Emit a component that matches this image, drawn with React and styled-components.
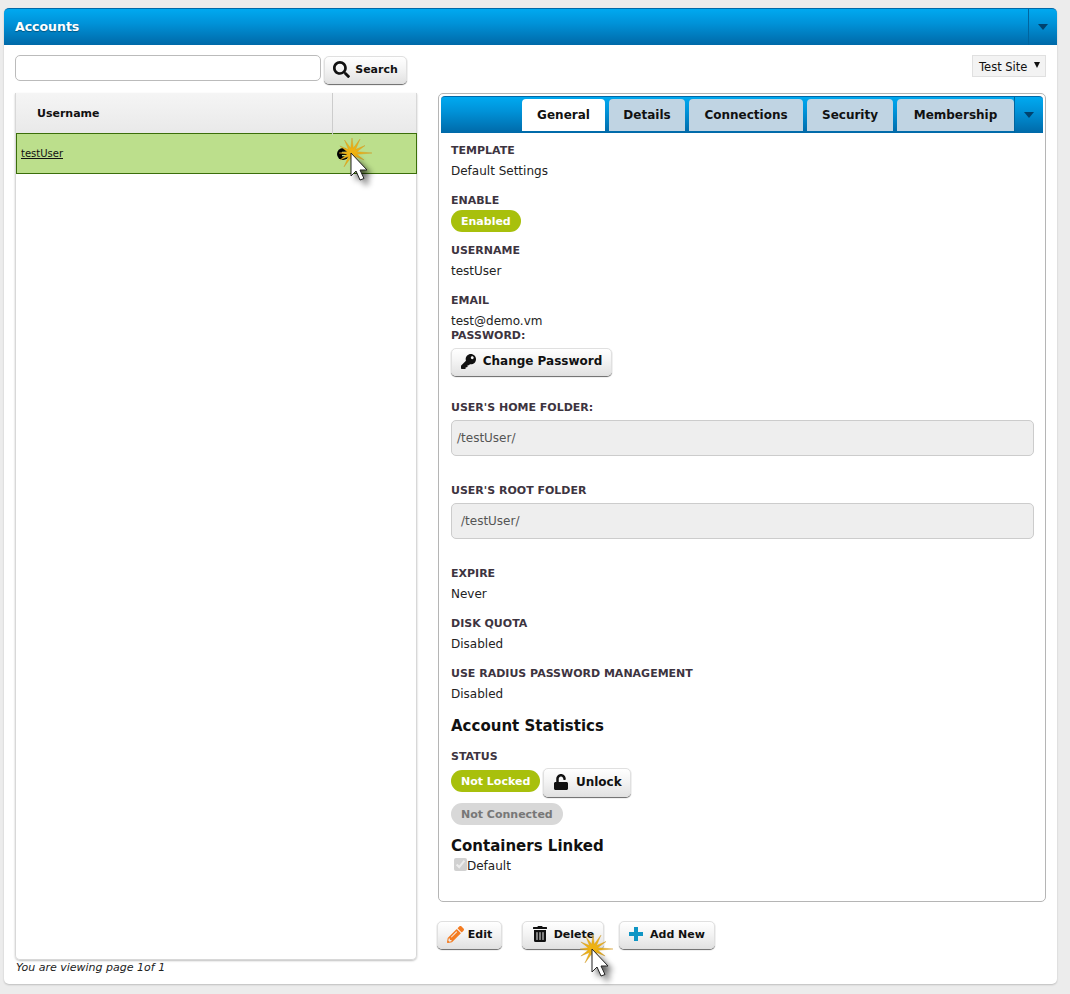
import React from 'react';
import styled, { createGlobalStyle } from 'styled-components';
import { FaSearch, FaKey, FaUnlock, FaPencilAlt, FaTrashAlt } from 'react-icons/fa';

const GlobalStyle = createGlobalStyle`
html, body { margin: 0; padding: 0; background: #ececec; }
body { font-family: "DejaVu Sans", Verdana, sans-serif; font-size: 12px; color: #111; }
* { box-sizing: border-box; }
`;

const Page = styled.div`
width: 1070px;
height: 994px;
padding: 8px 13px 10px 4px;
`;

const Panel = styled.div`
height: 976px;
background: #fff;
border-radius: 5px;
box-shadow: 0 1px 2px rgba(0,0,0,0.2);
display: flex;
flex-direction: column;
`;

const BlueBar = styled.div`
display: flex;
align-items: stretch;
background: linear-gradient(#00a9f0 0%, #0092d8 40%, #0069a8 100%);
border-top: 1px solid #0069a8;
border-radius: ${p => p.$radius}px ${p => p.$radius}px 0 0;
height: 37px;
`;

const PanelTitle = styled.h1`
flex: 1;
margin: 0;
padding-left: 11px;
line-height: 36px;
font-size: 12.5px;
font-weight: 700;
color: #fff;
text-shadow: 0 1px 1px rgba(0,0,0,0.35);
`;

const ArrowCell = styled.div`
width: 29px;
display: flex;
align-items: center;
justify-content: center;
border-left: 1px solid #00659f;
&::after {
    content: '';
    border-left: 5px solid transparent;
    border-right: 5px solid transparent;
    border-top: 6px solid #00426e;
}
`;

const Body = styled.div`
flex: 1;
display: grid;
grid-template-columns: 402px 608px;
column-gap: 21px;
padding: 10px 11px 0;
`;

const Column = styled.div`
display: flex;
flex-direction: column;
`;

const TopRow = styled.div`
height: 38px;
display: flex;
align-items: flex-start;
justify-content: ${p => p.$end ? 'flex-end' : 'flex-start'};
`;

const SearchInput = styled.input`
width: 306px;
height: 26px;
border: 1px solid #bbb;
border-radius: 5px;
background: #fff;
margin-right: 3px;
`;

const Button = styled.button`
display: inline-flex;
align-items: center;
justify-content: center;
position: relative;
gap: ${p => p.$gap || 7}px;
width: ${p => p.$width}px;
height: ${p => p.$height || 28}px;
margin: ${p => p.$margin || 0};
padding: 0 0 2px;
font-family: "DejaVu Sans", Verdana, sans-serif;
font-size: ${p => p.$font || 11}px;
font-weight: 700;
color: #111;
background: linear-gradient(#fff 0%, #f4f4f4 45%, #e2e2e2 100%);
border: 1px solid #e0e0e0;
border-radius: 5px;
box-shadow: 0 1px 1px 0 #666;
svg { flex: none; }
`;

const Grid = styled.div`
height: 867px;
border: 1px solid #d8d8d8;
border-top: 0;
border-radius: 0 0 5px 5px;
box-shadow: 0 1px 2px rgba(0,0,0,0.25);
`;

const GridHead = styled.div`
height: 40px;
display: grid;
grid-template-columns: 317px 1fr;
background: linear-gradient(#f5f5f5, #e9e9e9);
`;

const HeadCell = styled.div`
padding-left: 21px;
line-height: 42px;
font-size: 11px;
font-weight: 700;
border-right: ${p => p.$divider ? '1px solid #ccc' : '0'};
`;

const GridRow = styled.div`
height: 41px;
display: grid;
grid-template-columns: 316px 1fr;
align-items: center;
background: #bcdf8c;
border: 1px solid #3b6e0a;
margin-right: -1px;
`;

const UserLink = styled.a`
padding-left: 4px;
font-size: 10px;
color: #111;
text-decoration: underline;
`;

const RowAction = styled.div`
position: relative;
height: 100%;
display: flex;
align-items: center;
padding-left: 4px;
`;

const PageNote = styled.div`
height: 14px;
margin-top: 1px;
padding-left: 1px;
line-height: 14px;
font-size: 11px;
font-style: italic;
color: #222;
`;

const SiteSelect = styled.div`
width: 74px;
height: 22px;
display: flex;
align-items: center;
justify-content: space-between;
padding: 1px 5px 0 6px;
font-size: 11.5px;
background: #f3f3f3;
border: 1px solid #e0e0e0;
&::after {
    content: '';
    margin-bottom: 3px;
    border-left: 3px solid transparent;
    border-right: 3px solid transparent;
    border-top: 6px solid #111;
}
`;

const TabPanel = styled.div`
height: 809px;
border: 1px solid #b5b5b5;
border-radius: 5px;
padding: 2px;
`;

const TabList = styled.div`
flex: 1;
display: flex;
justify-content: flex-end;
align-items: flex-end;
gap: 4px;
`;

const Tab = styled.div`
width: ${p => p.$width}px;
height: 32px;
margin-bottom: 2px;
display: flex;
align-items: center;
justify-content: center;
font-size: 12px;
font-weight: 700;
border-radius: 4px 4px 0 0;
background: ${p => p.$active ? '#fff' : '#c0d4e3'};
`;

const TabBody = styled.div`
padding: 8px 9px 0 10px;
`;

const Field = styled.div`
margin-bottom: ${p => p.$gap ?? 10}px;
`;

const Label = styled.div`
line-height: ${p => p.$line || 20}px;
font-size: 11px;
font-weight: 700;
color: #3d3440;
`;

const Value = styled.div`
line-height: 20px;
font-size: 12px;
color: #222;
`;

const Badge = styled.span`
display: block;
width: fit-content;
height: 22px;
line-height: 23px;
padding: 0 10px;
border-radius: 11px;
font-size: 11px;
font-weight: 700;
color: ${p => p.$off ? '#777' : '#fff'};
background: ${p => p.$off ? '#d8d8d8' : '#a8c00c'};
`;

const EnableBadge = styled(Badge)`
margin-top: -1px;
`;

const LockBadge = styled(Badge)`
margin-top: 2px;
`;

const ReadOnlyBox = styled.div`
height: 36px;
margin-top: 2px;
padding-left: ${p => p.$pad}px;
line-height: 34px;
font-size: 12px;
color: #555;
background: #eee;
border: 1px solid #ccc;
border-radius: 5px;
`;

const SectionTitle = styled.h3`
margin: ${p => p.$top}px 0 0;
line-height: 22px;
font-size: 15px;
font-weight: 700;
color: #111;
`;

const StatusLabel = styled(Label)`
margin-top: 10px;
`;

const StatusRow = styled.div`
display: flex;
align-items: flex-start;
gap: 3px;
height: 29px;
margin-top: 1px;
`;

const ConnectionRow = styled.div`
margin-top: 6px;
height: 23px;
`;

const CheckRow = styled.label`
display: flex;
align-items: center;
height: 18px;
font-size: 12px;
color: #222;
input {
    width: 13px;
    height: 13px;
    margin: 0 0 0 3px;
    transform: translateY(-2px);
}
`;

const Actions = styled.div`
display: flex;
margin: 19px 0 0 -1px;
`;

const Burst = styled.svg`
position: absolute;
left: ${p => p.$left}px;
top: ${p => p.$top}px;
pointer-events: none;
overflow: visible;
`;

// spiky star behind the click cursor
const spokes = [20, 14, 17, 14, 16, 14, 13, 14, 15, 15, 16, 15];
const burstPoints = Array.from({ length: 24 }, (_, i) => {
    const angle = (i / 24) * Math.PI * 2;
    const radius = i % 2 === 0 ? spokes[i / 2] : 5;
    return `${(24 + Math.cos(angle) * radius).toFixed(1)},${(24 + Math.sin(angle) * radius).toFixed(1)}`;
}).join(' ');

const ClickCursor = ({ left, top }) => (
    <Burst $left={left} $top={top} width="48" height="60" viewBox="0 0 48 60">
        <defs>
            <filter id="cursor-shadow" x="-80%" y="-80%" width="260%" height="260%">
                <feGaussianBlur stdDeviation="3" />
            </filter>
        </defs>
        <polygon points={burstPoints} fill="#eeb212" stroke="#c9962a" strokeWidth="0.4" />
        <path d="M28 29 L28 52 L33 47 L37 56 L41 54 L37 46 L44 46 Z" fill="#000" opacity="0.65" filter="url(#cursor-shadow)" />
        <path d="M23 24 L23 47 L28 42 L32 51 L36 49.5 L32 41 L39 41 Z" fill="#fff" stroke="#222" strokeWidth="1" strokeLinejoin="round" />
    </Burst>
);

const RowIcon = () => (
    <svg width="12" height="12" viewBox="0 0 12 12">
        <circle cx="6" cy="6" r="6" fill="#000" />
        <path d="M5 4.4 H11 M5 7.6 H11" stroke="#bcdf8c" strokeWidth="1.2" />
    </svg>
);

const PlusIcon = () => (
    <svg width="14" height="14" viewBox="0 0 14 14">
        <path d="M5 0 H9 V5 H14 V9 H9 V14 H5 V9 H0 V5 H5 Z" fill="#0f95c4" />
    </svg>
);

const tabs = [
    { name: 'General', width: 83, active: true },
    { name: 'Details', width: 76 },
    { name: 'Connections', width: 114 },
    { name: 'Security', width: 86 },
    { name: 'Membership', width: 117 },
];

const App = () => (
    <Page>
        <GlobalStyle />
        <Panel>
            <BlueBar $radius={5}>
                <PanelTitle>Accounts</PanelTitle>
                <ArrowCell />
            </BlueBar>
            <Body>
                <Column>
                    <TopRow>
                        <SearchInput />
                        <Button $width={83} $margin="1px 0 0" $gap={5}>
                            <FaSearch size={17} /> Search
                        </Button>
                    </TopRow>
                    <Grid>
                        <GridHead>
                            <HeadCell $divider>Username</HeadCell>
                            <HeadCell />
                        </GridHead>
                        <GridRow>
                            <UserLink>testUser</UserLink>
                            <RowAction>
                                <RowIcon />
                                <ClickCursor left={-5} top={-5} />
                            </RowAction>
                        </GridRow>
                    </Grid>
                    <PageNote>You are viewing page 1of 1</PageNote>
                </Column>
                <Column>
                    <TopRow $end>
                        <SiteSelect>Test Site</SiteSelect>
                    </TopRow>
                    <TabPanel>
                        <BlueBar $radius={4}>
                            <TabList>
                                {tabs.map(tab => (
                                    <Tab key={tab.name} $width={tab.width} $active={tab.active}>{tab.name}</Tab>
                                ))}
                            </TabList>
                            <ArrowCell />
                        </BlueBar>
                        <TabBody>
                            <Field>
                                <Label>TEMPLATE</Label>
                                <Value>Default Settings</Value>
                            </Field>
                            <Field $gap={9}>
                                <Label>ENABLE</Label>
                                <EnableBadge>Enabled</EnableBadge>
                            </Field>
                            <Field>
                                <Label>USERNAME</Label>
                                <Value>testUser</Value>
                            </Field>
                            <Field $gap={-2}>
                                <Label>EMAIL</Label>
                                <Value>test@demo.vm</Value>
                            </Field>
                            <Field $gap={22}>
                                <Label $line={14}>PASSWORD:</Label>
                                <Button $width={161} $margin="5px 0 0" $font={12}>
                                    <FaKey size={15} /> Change Password
                                </Button>
                            </Field>
                            <Field $gap={25}>
                                <Label>USER'S HOME FOLDER:</Label>
                                <ReadOnlyBox $pad={5}>/testUser/</ReadOnlyBox>
                            </Field>
                            <Field $gap={25}>
                                <Label>USER'S ROOT FOLDER</Label>
                                <ReadOnlyBox $pad={9}>/testUser/</ReadOnlyBox>
                            </Field>
                            <Field>
                                <Label>EXPIRE</Label>
                                <Value>Never</Value>
                            </Field>
                            <Field>
                                <Label>DISK QUOTA</Label>
                                <Value>Disabled</Value>
                            </Field>
                            <Field $gap={0}>
                                <Label>USE RADIUS PASSWORD MANAGEMENT</Label>
                                <Value>Disabled</Value>
                            </Field>
                            <SectionTitle $top={11}>Account Statistics</SectionTitle>
                            <StatusLabel>STATUS</StatusLabel>
                            <StatusRow>
                                <LockBadge>Not Locked</LockBadge>
                                <Button $width={88} $height={29} $font={12}>
                                    <FaUnlock size={16} /> Unlock
                                </Button>
                            </StatusRow>
                            <ConnectionRow>
                                <Badge $off>Not Connected</Badge>
                            </ConnectionRow>
                            <SectionTitle $top={9}>Containers Linked</SectionTitle>
                            <CheckRow>
                                <input type="checkbox" checked disabled readOnly />
                                Default
                            </CheckRow>
                        </TabBody>
                    </TabPanel>
                    <Actions>
                        <Button $width={65} $gap={4}>
                            <FaPencilAlt size={17} color="#f47b20" /> Edit
                        </Button>
                        <Button $width={82} $margin="0 0 0 20px" $gap={6}>
                            <FaTrashAlt size={16} /> Delete
                            <ClickCursor left={46} top={3} />
                        </Button>
                        <Button $width={96} $margin="0 0 0 15px">
                            <PlusIcon /> Add New
                        </Button>
                    </Actions>
                </Column>
            </Body>
        </Panel>
    </Page>
);

export default App;
